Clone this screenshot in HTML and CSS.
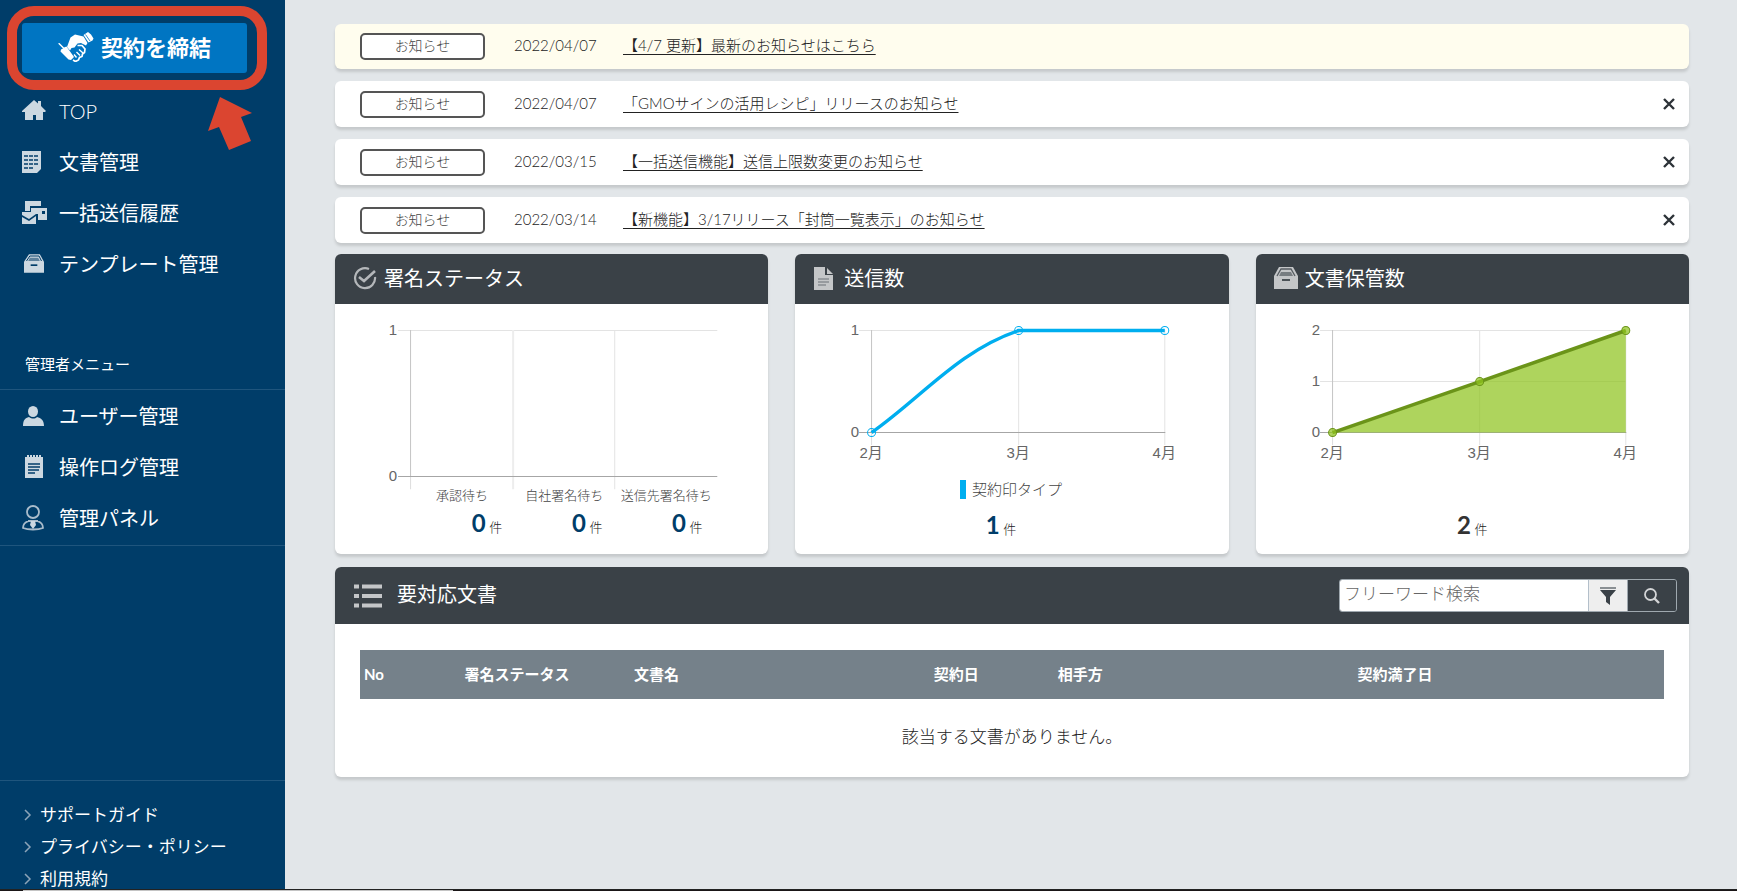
FILE: index.html
```html
<!DOCTYPE html>
<html lang="ja">
<head>
<meta charset="utf-8">
<title>TOP</title>
<link rel="stylesheet" href="styles.css">
</head>
<body>
<div class="app">
  <aside class="sidebar">
    <div class="cta">
      <button class="cta-button" type="button">
        <svg width="36" height="30" viewBox="0 0 36 30" aria-hidden="true">
          <path d="M0 11.500 1.500 11 6 15.500 8.500 14.500 16 25 13 28 10.500 27.500 2.500 19.500 3 17.500 5 16.500z" fill="#fff"/>
          <path d="M9 15 12.500 5.500 17 2.500 25.500 4.500 29.500 11 28 13.500 23 11 19.500 11.500 16.500 15.500 13.500 16 12 18.500z" fill="#fff"/>
          <path d="M25.500 3 30 0 33 2.500 35.500 6.500 34.500 8.500 30.500 10.500z" fill="#fff"/>
          <path d="M27.500 2.500 32 9" stroke="#0075c2" stroke-width="0.800"/>
          <path d="M19.500 13.500 24 13.500 27 17 26.500 20.500 24.500 22 24 24.500 21.500 25.500 20.500 28 17.500 29.500 15 28" fill="none" stroke="#fff" stroke-width="1.700"/>
          <path d="M16 22.500 18.500 25.500M18.500 20 22 23.500M21 17.500 25 21" fill="none" stroke="#fff" stroke-width="1.400"/>
        </svg>
        <span>契約を締結</span>
      </button>
      <span class="cta-ring"></span>
      <svg class="cta-arrow" width="44" height="54" viewBox="0 0 44 54" aria-hidden="true"><path d="M12 0 44 16 33 20 43 44 21 53 11 30 0 34z" fill="#db4530"/></svg>
    </div>
    <nav class="menu">
      <a href="#"><svg width="26" height="22" viewBox="0 0 26 22"><path d="M12 0 16 3.500V1h3v5l5 5-1 1h-2v8h-7v-5h-3v5H3v-8H0v-1z" fill="#ccd8e1"/></svg><span class="latin">TOP</span></a>
      <a href="#"><svg width="26" height="22" viewBox="0 0 26 22"><path d="M0 0h19v18l-4 4H0z" fill="#ccd8e1"/><path d="M2 5h15M2 9h15M2 13h15M2 17h10" stroke="#003d69" stroke-width="1.500" stroke-dasharray="4 1"/></svg><span>文書管理</span></a>
      <a href="#"><svg width="26" height="24" viewBox="0 0 26 24"><path d="M3 0h16v5H8v5H3zM9 7h16v12h-9v-6H9z" fill="#ccd8e1"/><path d="M0 11h14v2l-7 5-7-4z" fill="#ccd8e1"/><path d="M0 16 7 20 14 15v8H0z" fill="#ccd8e1"/><path d="M20 10h3v3h-3z" fill="#003d69"/></svg><span>一括送信履歴</span></a>
      <a href="#"><svg class="inset" width="20" height="19" viewBox="0 0 24 22"><path d="M6 0h13l5 9v13H0V9z" fill="#ccd8e1"/><path d="M3 8 7 2h11l3 6" fill="none" stroke="#003d69" stroke-width="1.200"/><path d="M7 4h10l2 4H5z" fill="#5d819c"/><path d="M8 13h8" stroke="#003d69" stroke-width="2"/></svg><span>テンプレート管理</span></a>
    </nav>
    <h2 class="menu-label">管理者メニュー</h2>
    <nav class="menu admin">
      <a href="#"><svg width="24" height="20" viewBox="0 0 24 20"><ellipse cx="11" cy="5.500" rx="5" ry="5.500" fill="#ccd8e1"/><path d="M1 20c0-6 2-8 6-9 3 2 6 2 8 0 4 1 7 3 7 9z" fill="#ccd8e1"/></svg><span>ユーザー管理</span></a>
      <a href="#"><svg width="24" height="23" viewBox="0 0 24 23"><path d="M3 2h18v21H3z" fill="#ccd8e1"/><path d="M5 1h15" stroke="#ccd8e1" stroke-width="2" stroke-dasharray="2 1"/><path d="M6 9h12M6 12h12M6 15h11M6 18h7" stroke="#003d69" stroke-width="1.500"/></svg><span>操作ログ管理</span></a>
      <a href="#"><svg width="24" height="26" viewBox="0 0 24 26"><g fill="none" stroke="#a9bccb" stroke-width="1.800"><circle cx="11" cy="7" r="6"/><path d="M7 16c-4 1-6 3-6 7 5 2 15 2 20 0 0-4-2-6-6-7M6 16h10"/></g><path d="M9 16h4l1 4-3 4-3-4z" fill="#ccd8e1"/></svg><span>管理パネル</span></a>
    </nav>
    <nav class="support">
      <a href="#"><svg width="8" height="12" viewBox="0 0 8 12"><path d="M1 1l5 5-5 5" fill="none" stroke="#8ba4b8" stroke-width="1.500"/></svg>サポートガイド</a>
      <a href="#"><svg width="8" height="12" viewBox="0 0 8 12"><path d="M1 1l5 5-5 5" fill="none" stroke="#8ba4b8" stroke-width="1.500"/></svg>プライバシー・ポリシー</a>
      <a href="#"><svg width="8" height="12" viewBox="0 0 8 12"><path d="M1 1l5 5-5 5" fill="none" stroke="#8ba4b8" stroke-width="1.500"/></svg>利用規約</a>
    </nav>
  </aside>

  <main class="content">
    <section class="notices">
      <div class="notice highlight"><span class="badge">お知らせ</span><time>2022/04/07</time><a href="#">【4/7 更新】最新のお知らせはこちら</a></div>
      <div class="notice"><span class="badge">お知らせ</span><time>2022/04/07</time><a href="#">「GMOサインの活用レシピ」リリースのお知らせ</a><button class="close" type="button" aria-label="閉じる"><svg width="12" height="12" viewBox="0 0 12 12"><path d="M1 1l10 10M11 1L1 11" stroke="#2d3338" stroke-width="2.400"/></svg></button></div>
      <div class="notice"><span class="badge">お知らせ</span><time>2022/03/15</time><a href="#">【一括送信機能】送信上限数変更のお知らせ</a><button class="close" type="button" aria-label="閉じる"><svg width="12" height="12" viewBox="0 0 12 12"><path d="M1 1l10 10M11 1L1 11" stroke="#2d3338" stroke-width="2.400"/></svg></button></div>
      <div class="notice"><span class="badge">お知らせ</span><time>2022/03/14</time><a href="#">【新機能】3/17リリース「封筒一覧表示」のお知らせ</a><button class="close" type="button" aria-label="閉じる"><svg width="12" height="12" viewBox="0 0 12 12"><path d="M1 1l10 10M11 1L1 11" stroke="#2d3338" stroke-width="2.400"/></svg></button></div>
    </section>

    <section class="cards">
      <article class="card">
        <h2 class="card-head"><svg width="24" height="23" viewBox="0 0 24 23"><g fill="none" stroke="#b4b7ba"><path d="M16 2A10 10 0 1 0 22 10" stroke-width="2.200"/><path d="M6 10l5 4L22 4" stroke-width="2.600"/></g></svg>署名ステータス</h2>
        <svg class="chart" viewBox="0 0 433 202">
          <g fill="none">
            <path d="M63 26.500H382M279.500 26V185" stroke="#e3e3e3"/>
            <path d="M178 26V185" stroke="#ededed" stroke-width="2"/>
            <path d="M75.500 26V172" stroke="#c4c4c4"/><path d="M75.500 172V185" stroke="#ddd"/>
            <path d="M63 172.500H382" stroke="#a6a6a6"/>
          </g>
          <g class="axis" text-anchor="end"><text x="62" y="31">1</text><text x="62" y="177">0</text></g>
          <g class="axis-small" text-anchor="middle"><text x="127" y="196">承認待ち</text><text x="229" y="196">自社署名待ち</text><text x="331" y="196">送信先署名待ち</text></g>
        </svg>
        <div class="stats three">
          <p class="stat"><b>0</b> 件</p><p class="stat"><b>0</b> 件</p><p class="stat"><b>0</b> 件</p>
        </div>
      </article>
      <article class="card">
        <h2 class="card-head"><svg width="24" height="23" viewBox="0 0 24 23"><path d="M1 0h11v8h8v15H1z" fill="#c4c6c8"/><path d="M14 1l6 6h-6z" fill="#c4c6c8"/><path d="M5 12h11M5 15h11M5 18h8" stroke="#6b7176" stroke-width="1.200"/></svg>送信数</h2>
        <svg class="chart" viewBox="0 0 433 168">
          <g fill="none">
            <path d="M64 26.500H370M223.500 26V141M369.500 26V141" stroke="#e3e3e3"/>
            <path d="M76.500 26V128" stroke="#c4c4c4"/><path d="M76.500 128V141" stroke="#ddd"/>
            <path d="M64 128.500H370" stroke="#a6a6a6"/>
            <path d="M76.500 128.500C127 93 163 47 223.500 26.500H369.500" stroke="#00aeef" stroke-width="3.500"/>
            <g stroke="#00aeef"><circle cx="76.500" cy="128.500" r="4"/><circle cx="223.500" cy="26.500" r="4"/><circle cx="369.500" cy="26.500" r="4"/></g>
          </g>
          <g class="axis" text-anchor="end"><text x="64" y="31">1</text><text x="64" y="133">0</text></g>
          <g class="axis" text-anchor="middle"><text x="76" y="154">2月</text><text x="223" y="154">3月</text><text x="369" y="154">4月</text></g>
        </svg>
        <p class="legend"><i></i>契約印タイプ</p>
        <div class="stats shifted"><p class="stat"><b>1</b> 件</p></div>
      </article>
      <article class="card">
        <h2 class="card-head"><svg width="24" height="22" viewBox="0 0 24 22"><path d="M5 0h14l5 9v13H0V9z" fill="#c4c6c8"/><path d="M3 9 7 2h10l4 7" fill="none" stroke="#555c61" stroke-width="1.300"/><path d="M7 5h10l2 4H5z" fill="#777d81"/><path d="M8 13h8" stroke="#4b5257" stroke-width="2"/></svg>文書保管数</h2>
        <svg class="chart" viewBox="0 0 433 202">
          <g fill="none">
            <path d="M64 26.500H370M64 77.500H370M223.500 26V141M369.500 26V141" stroke="#e3e3e3"/>
            <path d="M76.500 26V128" stroke="#c4c4c4"/><path d="M76.500 128V141" stroke="#ddd"/>
            <path d="M64 128.500H370" stroke="#a6a6a6"/>
          </g>
          <path d="M76.500 128.500 223.500 77.500 369.500 26.500V128.500z" fill="#8fc31f" fill-opacity=".72"/>
          <path d="M76.500 128.500 223.500 77.500 369.500 26.500" fill="none" stroke="#6b9419" stroke-width="3.500"/>
          <g fill="#8fc31f" fill-opacity=".72" stroke="#6b9419"><circle cx="76.500" cy="128.500" r="4"/><circle cx="223.500" cy="77.500" r="4"/><circle cx="369.500" cy="26.500" r="4"/></g>
          <g class="axis" text-anchor="end"><text x="64" y="31">2</text><text x="64" y="82">1</text><text x="64" y="133">0</text></g>
          <g class="axis" text-anchor="middle"><text x="76" y="154">2月</text><text x="223" y="154">3月</text><text x="369" y="154">4月</text></g>
        </svg>
        <div class="stats dark"><p class="stat"><b>2</b> 件</p></div>
      </article>
    </section>

    <section class="documents">
      <header class="documents-head">
        <svg width="28" height="24" viewBox="0 0 28 24"><path d="M0 2.500h5M0 12h5M0 21.500h5M8 2.500h20M8 12h20M8 21.500h20" stroke="#c4c6c8" stroke-width="4"/></svg>
        <h2>要対応文書</h2>
        <form class="search">
          <input type="text" placeholder="フリーワード検索" aria-label="フリーワード検索">
          <button class="filter" type="button" aria-label="絞り込み"><svg width="16" height="18" viewBox="0 0 16 18"><path d="M0 3h16l-6 7v8l-4-3v-5z" fill="#3a4147"/><path d="M0 1h16" stroke="#8a8f93" stroke-width="2"/></svg></button>
          <button class="submit" type="submit" aria-label="検索"><svg width="18" height="18" viewBox="0 0 18 18"><circle cx="7.500" cy="7.500" r="5.500" fill="none" stroke="#d2d4d6" stroke-width="1.800"/><path d="M11 11l5 5" stroke="#d2d4d6" stroke-width="2.400"/></svg></button>
        </form>
      </header>
      <div class="documents-body">
        <table>
          <colgroup><col class="c-no"><col class="c-status"><col class="c-name"><col class="c-date"><col class="c-party"><col></colgroup>
          <thead><tr><th>No</th><th>署名ステータス</th><th>文書名</th><th>契約日</th><th>相手方</th><th>契約満了日</th></tr></thead>
          <tbody><tr><td colspan="6">該当する文書がありません。</td></tr></tbody>
        </table>
      </div>
    </section>
  </main>
</div>
<footer class="strip"><i></i></footer>
</body>
</html>
```
FILE: styles.css
```css
* { box-sizing: border-box; }
html, body { margin: 0; height: 100%; }
body {
  display: flex;
  flex-direction: column;
  overflow: hidden;
  background: #e2e6e9;
  color: #222;
  font-family: Lato, "Noto Sans CJK JP", sans-serif;
  font-weight: 300;
  font-size: 15px;
  line-height: 1.5;
}
h2, p { margin: 0; font-weight: inherit; }
button { font: inherit; cursor: pointer; padding: 0; }
a { color: inherit; }

.app { flex: 1; min-height: 0; display: flex; overflow: hidden; }

/* Sidebar */
.sidebar {
  flex: 0 0 285px;
  overflow: hidden;
  padding-top: 23px;
  background: #003d69;
  color: #fff;
  font-weight: 400;
}
.cta { position: relative; margin: 0 38px 12px 22px; }
.cta-button {
  display: flex;
  align-items: center;
  justify-content: center;
  gap: 7px;
  width: 100%;
  height: 50px;
  padding-bottom: 2px;
  border: 0;
  border-radius: 3px;
  background: #0075c2;
  color: #fff;
  font-size: 22px;
  font-weight: 700;
}
.cta-ring {
  position: absolute;
  inset: -17px -20px -17px -15px;
  border: 10px solid #db4530;
  border-radius: 27px;
  pointer-events: none;
}
.cta-arrow { position: absolute; left: 186px; top: 74px; }
.menu a {
  display: grid;
  grid-template-columns: 37px 1fr;
  align-items: center;
  height: 51px;
  padding-left: 22px;
  font-size: 20px;
  text-decoration: none;
}
.menu .inset { margin-left: 2px; }
.menu .latin { font-weight: 300; }
.menu-label {
  margin-top: 51px;
  padding-left: 25px;
  height: 50px;
  border-bottom: 1px solid #1f557d;
  font-size: 15px;
  line-height: 48px;
}
.admin { padding-bottom: 2px; border-bottom: 1px solid #1f557d; }
.support { margin-top: 234px; padding-top: 18px; border-top: 1px solid #1f557d; }
.support a {
  display: flex;
  align-items: center;
  gap: 8px;
  height: 32px;
  padding-left: 24px;
  font-size: 17px;
  text-decoration: none;
}

/* Main column */
.content { flex: 1; min-width: 0; padding: 24px 48px 0 50px; }
.notices { display: grid; gap: 12px; }
.notice, .card, .documents {
  border-radius: 6px;
  background: #fff;
  box-shadow: 0 3px 3px rgba(0, 0, 0, .13);
}
.notice {
  display: grid;
  grid-template-columns: 125px 80px 1fr 24px;
  align-items: center;
  column-gap: 29px;
  height: 45px;
  padding: 0 8px 0 25px;
}
.notice.highlight { background: #fffdee; }
.notice + .notice { height: 46px; }
.notice a { justify-self: start; text-underline-offset: 3px; }
.badge {
  height: 27px;
  border: 2px solid #555;
  border-radius: 5px;
  background: #fff;
  color: #444;
  font-size: 14px;
  line-height: 22px;
  text-align: center;
}
.notice time, .notice a { padding-bottom: 2px; }
.close {
  display: grid;
  place-items: center;
  width: 24px;
  height: 24px;
  border: 0;
  background: none;
}

/* Charts */
.cards { display: grid; grid-template-columns: repeat(3, 1fr); gap: 27px; margin-top: 11px; }
.card { min-height: 300px; overflow: hidden; }
.card-head {
  display: flex;
  align-items: center;
  gap: 7px;
  height: 50px;
  padding: 0 0 2px 18px;
  background: #3a4147;
  color: #fff;
  font-size: 20px;
  font-weight: 400;
}
.chart { display: block; width: 100%; }
.axis, .axis-small { fill: #666; font-family: "Liberation Sans", "Noto Sans CJK JP", sans-serif; font-weight: 400; }
.axis { font-size: 15px; }
.axis-small { font-size: 13px; font-weight: 300; fill: #444; }
.legend {
  display: flex;
  align-items: center;
  justify-content: center;
  gap: 6px;
  height: 34px;
  padding-right: 2px;
  color: #444;
}
.legend i { width: 6px; height: 19px; background: #00aeef; }
.stats { padding-top: 1px; text-align: center; line-height: 36px; }
.shifted { padding-right: 22px; }
.three { display: grid; grid-template-columns: repeat(3, 1fr); padding: 0 31px 0 102px; line-height: 34px; }
.stat { font-size: 13px; }
.stat b { color: #003d69; font-size: 24px; font-weight: 700; }
.dark .stat b { color: #333; }

/* Documents */
.documents { margin-top: 13px; overflow: hidden; }
.documents-head {
  display: flex;
  align-items: center;
  height: 57px;
  padding: 0 12px 0 19px;
  background: #3a4147;
  color: #fff;
}
.documents-head h2 { flex: 1; padding: 0 0 3px 15px; font-size: 20px; font-weight: 400; }
.search {
  display: grid;
  grid-template-columns: 248px 39px 1fr;
  height: 33px;
  border: 1px solid #9fa8af;
  border-radius: 3px;
  overflow: hidden;
  width: 338px;
}
.search input {
  min-width: 0;
  padding: 0 4px 3px;
  border: 0;
  background: #fff;
  color: #333;
  font: inherit;
  font-size: 17px;
}
.search input::placeholder { color: #666; }
.search button { display: grid; place-items: center; border: 0; }
.search .filter { border-left: 1px solid #b3bfca; background: #eee; }
.search .submit { border-left: 1px solid #9fa8af; background: #3a4147; }
.documents-body { padding: 26px 25px 2px; }
table { width: 100%; border-collapse: collapse; table-layout: fixed; }
th {
  height: 49px;
  padding: 0 4px 1px;
  background: #75818a;
  color: #fff;
  font-weight: 700;
  text-align: left;
}
td { height: 76px; padding: 0; font-size: 17px; text-align: center; }
.c-no { width: 7.7%; }
.c-status { width: 13%; }
.c-name { width: 23%; }
.c-date { width: 9.500%; }
.c-party { width: 23%; }

.strip { flex: 0 0 2px; padding-left: 23px; border-top: 1px solid #222; background: #1a1617; }
.strip i { display: block; width: 430px; height: 1px; background: #c4c4c4; }
```
